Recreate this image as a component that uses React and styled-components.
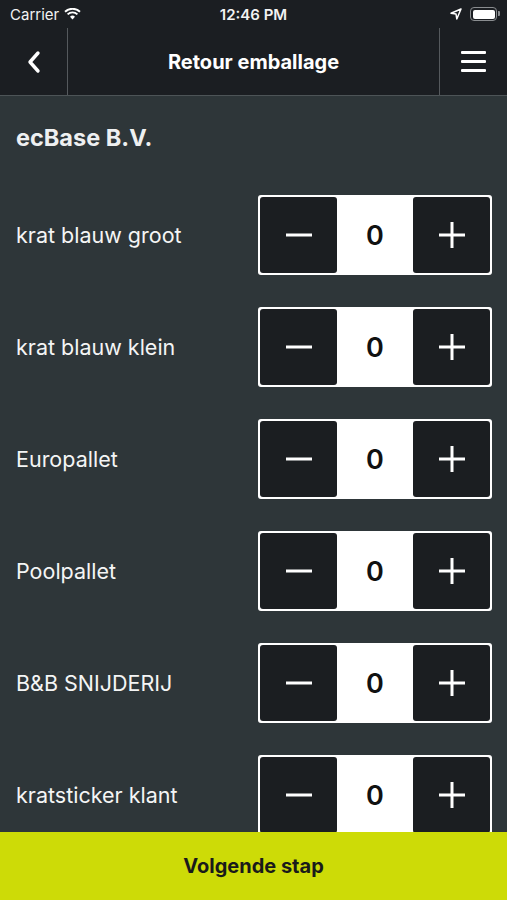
import React, { useState } from 'react';
import styled, { createGlobalStyle } from 'styled-components';

const GlobalStyle = createGlobalStyle`
    * {
        box-sizing: border-box;
    }

    body {
        margin: 0;
        background: #2e3639;
        font-family: Inter, 'Noto Sans', sans-serif;
    }
`;

// 전체 화면
const Screen = styled.div`
    display: flex;
    flex-direction: column;
    width: 100%;
    height: 100vh;
    background: #2e3639;
    color: #ffffff;
    overflow: hidden;
`;

// 상단 헤더 (상태바 + 네비게이션)
const Header = styled.header`
    background: #1b1e22;
    border-bottom: 1px solid #4d5457;
`;

const StatusBar = styled.div`
    display: grid;
    grid-template-columns: 1fr auto 1fr;
    align-items: center;
    height: 28px;
    padding: 0 10px;
    font-size: 15px;
    color: #f2f2f2;
`;

const StatusLeft = styled.div`
    display: flex;
    align-items: center;
    gap: 5px;
`;

const StatusTime = styled.div`
    font-weight: 600;
`;

const StatusRight = styled.div`
    display: flex;
    align-items: center;
    justify-content: flex-end;
    gap: 8px;
`;

const Battery = styled.div`
    position: relative;
    width: 27px;
    height: 14px;
    border: 1.5px solid #8a8d90;
    border-radius: 4px;
    padding: 1.5px;

    &::before {
        content: '';
        display: block;
        width: 100%;
        height: 100%;
        background: #ffffff;
        border-radius: 2px;
    }

    &::after {
        content: '';
        position: absolute;
        right: -4px;
        top: 3px;
        width: 2px;
        height: 5px;
        background: #8a8d90;
        border-radius: 0 1px 1px 0;
    }
`;

const NavBar = styled.nav`
    display: grid;
    grid-template-columns: 68px 1fr 68px;
    height: 67px;
`;

const NavButton = styled.div`
    display: flex;
    align-items: center;
    justify-content: center;
    border-${(p) => p.$side}: 1px solid #55595d;
`;

const NavTitle = styled.div`
    display: flex;
    align-items: center;
    justify-content: center;
    font-size: 20px;
    font-weight: 700;
`;

// 본문
const Content = styled.main`
    flex: 1;
    overflow: hidden;
    padding: 19px 15px 0 16px;
`;

const Company = styled.h1`
    margin: 0 0 36px;
    height: 44px;
    line-height: 46px;
    font-size: 23.5px;
    font-weight: 700;
    color: #eef0f1;
`;

const Row = styled.div`
    display: flex;
    align-items: center;
    justify-content: space-between;
    height: 80px;
    margin-bottom: 32px;
`;

const Label = styled.span`
    font-size: 21.5px;
    color: #f4f5f5;
`;

// 수량 스테퍼
const Stepper = styled.div`
    display: flex;
    align-items: stretch;
    width: 234px;
    height: 80px;
    padding: 2px;
    background: #ffffff;
    border-radius: 3px;
`;

const StepButton = styled.button`
    all: unset;
    display: flex;
    align-items: center;
    justify-content: center;
    width: 77px;
    background: #1b1e21;
    border-radius: 3px;
    cursor: pointer;
`;

const Count = styled.div`
    flex: 1;
    display: flex;
    align-items: center;
    justify-content: center;
    font-size: 27px;
    font-weight: 600;
    color: #111111;
`;

// 하단 버튼
const NextButton = styled.button`
    all: unset;
    display: flex;
    align-items: center;
    justify-content: center;
    height: 68px;
    flex-shrink: 0;
    background: #cddb07;
    color: #1a1a1a;
    font-size: 20px;
    font-weight: 700;
    cursor: pointer;
`;

const items = [
    'krat blauw groot',
    'krat blauw klein',
    'Europallet',
    'Poolpallet',
    'B&B SNIJDERIJ',
    'kratsticker klant',
];

const MinusIcon = () => (
    <svg width="26" height="4" viewBox="0 0 26 4">
        <rect x="0" y="0.5" width="26" height="3" fill="#fff" />
    </svg>
);

const PlusIcon = () => (
    <svg width="26" height="26" viewBox="0 0 26 26">
        <rect x="0" y="11.5" width="26" height="3" fill="#fff" />
        <rect x="11.5" y="0" width="3" height="26" fill="#fff" />
    </svg>
);

export default function App() {
    const [counts, setCounts] = useState(items.map(() => 0));

    const change = (i, d) => {
        setCounts((c) => c.map((v, j) => (j === i ? Math.max(0, v + d) : v)));
    };

    return (
        <Screen>
            <GlobalStyle />
            <Header>
                <StatusBar>
                    <StatusLeft>
                        Carrier
                        <svg width="17" height="12" viewBox="0 0 17 12">
                            <path d="M8.5 11.5 L6 8.8 A3.6 3.6 0 0 1 11 8.8 Z" fill="#fff" />
                            <path d="M3.6 6.4 A7 7 0 0 1 13.4 6.4" stroke="#fff" strokeWidth="1.9" fill="none" />
                            <path d="M1 3.8 A10.8 10.8 0 0 1 16 3.8" stroke="#fff" strokeWidth="1.9" fill="none" />
                        </svg>
                    </StatusLeft>
                    <StatusTime>12:46 PM</StatusTime>
                    <StatusRight>
                        <svg width="12" height="12" viewBox="0 0 12 12">
                            <path d="M11 1 L1 5.2 L6 6 L6.8 11 Z" fill="none" stroke="#fff" strokeWidth="1.5" strokeLinejoin="round" />
                        </svg>
                        <Battery />
                    </StatusRight>
                </StatusBar>
                <NavBar>
                    <NavButton $side="right">
                        <svg width="14" height="24" viewBox="0 0 14 24">
                            <path d="M11 3 L3 12 L11 21" stroke="#fff" strokeWidth="3.4" fill="none" strokeLinecap="round" strokeLinejoin="round" />
                        </svg>
                    </NavButton>
                    <NavTitle>Retour emballage</NavTitle>
                    <NavButton $side="left">
                        <svg width="25" height="21" viewBox="0 0 25 21">
                            <rect x="0" y="0" width="25" height="3" rx="1" fill="#fff" />
                            <rect x="0" y="9" width="25" height="3" rx="1" fill="#fff" />
                            <rect x="0" y="18" width="25" height="3" rx="1" fill="#fff" />
                        </svg>
                    </NavButton>
                </NavBar>
            </Header>

            <Content>
                <Company>ecBase B.V.</Company>
                {items.map((name, i) => (
                    <Row key={name}>
                        <Label>{name}</Label>
                        <Stepper>
                            <StepButton onClick={() => change(i, -1)}>
                                <MinusIcon />
                            </StepButton>
                            <Count>{counts[i]}</Count>
                            <StepButton onClick={() => change(i, 1)}>
                                <PlusIcon />
                            </StepButton>
                        </Stepper>
                    </Row>
                ))}
            </Content>

            <NextButton>Volgende stap</NextButton>
        </Screen>
    );
}
